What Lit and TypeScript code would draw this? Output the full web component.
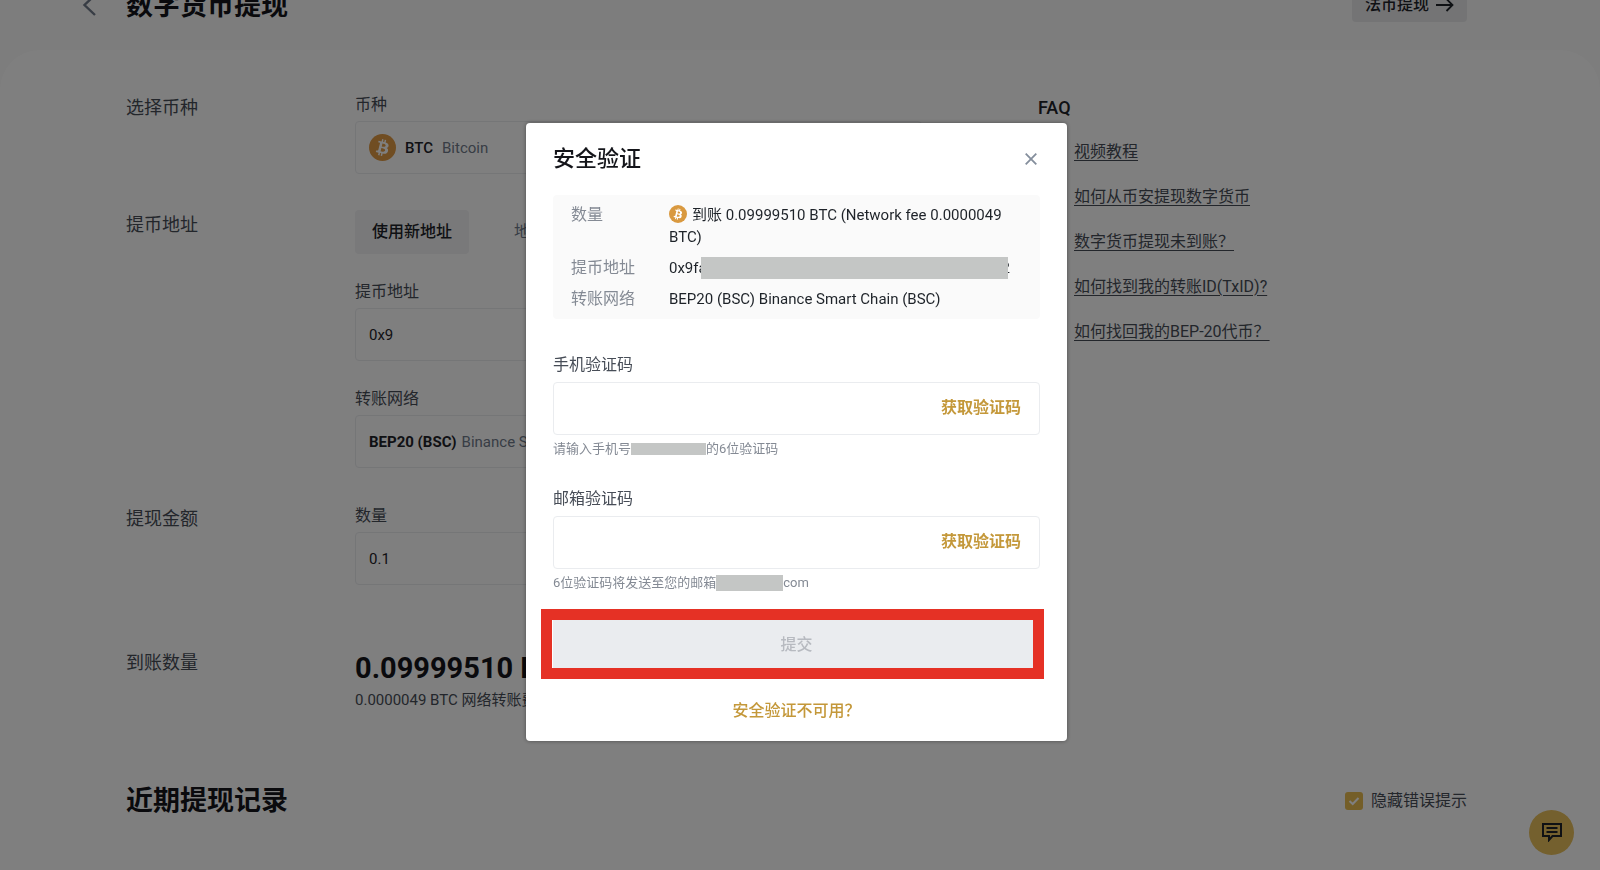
import { LitElement, html, css, svg } from "lit";
import { customElement, property } from "lit/decorators.js";

const coin = svg`
  <circle cx="16" cy="16" r="16" fill="currentColor"></circle>
  <path fill="#fff" fill-rule="evenodd" d="M23.2 14c.3-2.100-1.300-3.300-3.500-4l.7-2.900-1.700-.4-.7 2.800-1.400-.3.700-2.800-1.700-.4-.7 2.800-3.500-.9-.5 1.900s1.300.3 1.300.3c.7.200.8.600.8 1l-2 8c-.1.200-.3.500-.8.400l-1.300-.3-.9 2 3.400.9-.7 2.900 1.700.4.700-2.900 1.400.4-.7 2.800 1.700.4.700-2.900c3 .6 5.200.3 6.200-2.400.7-2.100 0-3.400-1.600-4.200 1.200-.3 2.100-1 2.400-2.600zm-4.100 5.700c-.5 2.200-4.200 1-5.400.7l1-3.900c1.200.3 5 .9 4.400 3.200zm.6-5.700c-.5 2-3.600 1-4.600.7l.9-3.500c1 .3 4.200.7 3.700 2.800z"></path>`;

const base = css`
  :host {
    font-family: Roboto, "Noto Sans CJK SC", sans-serif;
    font-size: 16px;
    line-height: 24px;
    color: #1e2329;
  }
  *,
  *::before,
  *::after {
    box-sizing: border-box;
  }
  h1,
  h2,
  p,
  dl,
  dd,
  ul {
    margin: 0;
    padding: 0;
  }
  button,
  input {
    font: inherit;
    color: inherit;
    background: none;
    border: 0;
    padding: 0;
    margin: 0;
  }
  svg {
    display: block;
    flex: none;
  }
`;

@customElement("code-field")
class CodeField extends LitElement {
  @property() label = "";

  static styles = [
    base,
    css`
      :host {
        display: block;
      }
      .label {
        display: block;
        padding-bottom: 5px;
        color: #474d57;
      }
      .box {
        display: flex;
        align-items: center;
        height: 53px;
        padding: 0 18px 0 14px;
        border: 1px solid #eaecef;
        border-radius: 4px;
      }
      .input {
        flex: 1;
        min-width: 0;
        height: 100%;
        outline: none;
      }
      .get {
        font-weight: 700;
        color: #c4983a;
      }
      .hint {
        display: flex;
        align-items: center;
        margin-top: 4px;
        font-size: 13px;
        line-height: 20px;
        color: #848a94;
      }
    `,
  ];

  render() {
    return html`
      <label class="label" for="code">${this.label}</label>
      <div class="box">
        <input class="input" id="code" type="text" inputmode="numeric" />
        <button class="get" type="button">获取验证码</button>
      </div>
      <p class="hint"><slot></slot></p>
    `;
  }
}

@customElement("verify-dialog")
class VerifyDialog extends LitElement {
  static styles = [
    base,
    css`
      :host {
        position: fixed;
        inset: 0;
        display: flex;
        align-items: center;
        justify-content: center;
        padding: 0 7px 7px 0;
        background: rgba(0, 0, 0, 0.5);
      }
      .dialog {
        width: 541px;
        max-width: 100%;
        padding: 20px 27px 18px;
        border-radius: 4px;
        background: #fff;
        box-shadow: 0 0 4px rgba(0, 0, 0, 0.4);
      }
      .head {
        display: flex;
        align-items: center;
        justify-content: space-between;
        padding-right: 3px;
      }
      .title {
        font-size: 22px;
        line-height: 32px;
        font-weight: 500;
        color: #14151a;
      }
      .close {
        color: #848e9c;
      }
      .summary {
        display: grid;
        grid-template-columns: 98px 1fr;
        row-gap: 9px;
        margin: 20px 0 34px;
        padding: 9px 18px;
        border-radius: 4px;
        line-height: 22px;
        background: #fafafa;
      }
      .term {
        color: #848a94;
      }
      .value {
        font-size: 15px;
      }
      .coin {
        display: inline-block;
        vertical-align: -3px;
        margin-right: 5px;
        color: #d9993f;
      }
      .address {
        display: flex;
      }
      .start {
        width: 32px;
        overflow: hidden;
      }
      .end {
        display: flex;
        justify-content: flex-end;
        width: 2px;
        overflow: hidden;
      }
      .mask {
        background: #c4c6c5;
      }
      .mask-address {
        flex: 1;
        max-width: 307px;
      }
      .mask-phone {
        width: 75px;
        height: 12px;
      }
      .mask-mail {
        width: 67px;
        height: 16px;
      }
      .fields {
        display: grid;
        gap: 28px;
      }
      .submit {
        position: relative;
        display: block;
        width: 100%;
        height: 50px;
        margin: 27px 0 29px;
        font-weight: 500;
        color: #b7bac0;
        background: #eaecef;
      }
      .submit::after {
        content: "";
        position: absolute;
        inset: -11px -4px -9px -12px;
        border: 11px solid #e53125;
      }
      .help {
        display: block;
        text-align: center;
        font-weight: 500;
        text-decoration: none;
        color: #c4983a;
      }
    `,
  ];

  render() {
    return html`
      <section class="dialog" role="dialog" aria-modal="true" aria-labelledby="title">
        <header class="head">
          <h2 class="title" id="title">安全验证</h2>
          <button class="close" type="button" aria-label="关闭">
            <svg width="12" height="12" viewBox="0 0 12 12" fill="none" stroke="currentColor" stroke-width="1.8">
              <path d="M.7.7l10.600 10.600M11.300.7L.7 11.300"></path>
            </svg>
          </button>
        </header>
        <dl class="summary">
          <dt class="term">数量</dt>
          <dd class="value">
            <svg class="coin" width="18" height="18" viewBox="0 0 32 32">${coin}</svg>到账 0.09999510 BTC (Network fee
            0.0000049 BTC)
          </dd>
          <dt class="term">提币地址</dt>
          <dd class="value address">
            <span class="start">0x9fa</span><span class="mask mask-address"></span><span class="end">2</span>
          </dd>
          <dt class="term">转账网络</dt>
          <dd class="value">BEP20 (BSC) Binance Smart Chain (BSC)</dd>
        </dl>
        <div class="fields">
          <code-field label="手机验证码">请输入手机号<span class="mask mask-phone"></span>的6位验证码</code-field>
          <code-field label="邮箱验证码">6位验证码将发送至您的邮箱<span class="mask mask-mail"></span>com</code-field>
        </div>
        <button class="submit" type="submit" disabled>提交</button>
        <a class="help" href="#help">安全验证不可用？</a>
      </section>
    `;
  }
}

@customElement("app-root")
class AppRoot extends LitElement {
  private faq = [
    "视频教程",
    "如何从币安提现数字货币",
    "数字货币提现未到账？",
    "如何找到我的转账ID(TxID)?",
    "如何找回我的BEP-20代币？",
  ];

  static styles = [
    base,
    css`
      :host {
        display: flex;
        flex-direction: column;
        min-height: 100vh;
        overflow: hidden;
        background: #fafafa;
      }
      .top {
        display: flex;
        align-items: flex-start;
        height: 66px;
        margin-top: -16px;
        padding: 0 133px 0 82px;
      }
      .back {
        width: 44px;
        height: 40px;
        color: #707a8a;
      }
      .title {
        flex: 1;
        font-size: 27px;
        line-height: 44px;
        font-weight: 700;
        color: #14151a;
      }
      .fiat {
        display: flex;
        align-items: center;
        gap: 7px;
        height: 38px;
        padding: 4px 13px 0;
        border-radius: 4px;
        font-weight: 500;
        background: #e8e9eb;
      }
      .panel {
        flex: 1;
        padding: 43px 133px 50px 126px;
        border-radius: 40px 40px 0 0;
        background: #fff;
      }
      .columns {
        display: grid;
        grid-template-columns: minmax(0, 796px) minmax(0, 1fr);
        column-gap: 116px;
      }
      .form {
        display: grid;
        row-gap: 36px;
      }
      .row {
        display: grid;
        grid-template-columns: 229px minmax(0, 1fr);
      }
      .row.total {
        margin-top: 27px;
      }
      .name {
        font-size: 18px;
        line-height: 30px;
        color: #474d57;
      }
      .group {
        display: grid;
        gap: 26px;
      }
      .label {
        display: block;
        padding-bottom: 4px;
        color: #474d57;
      }
      .box {
        display: flex;
        align-items: center;
        width: 100%;
        height: 53px;
        padding: 0 13px;
        border: 1px solid #eaecef;
        border-radius: 4px;
        font-size: 15px;
        text-align: left;
      }
      .coin {
        margin-right: 9px;
        color: #e09a45;
      }
      .code {
        margin-right: 9px;
        font-weight: 500;
      }
      .network {
        margin-right: 5px;
        font-weight: 700;
      }
      .muted {
        color: #707a8a;
      }
      .tabs {
        display: flex;
        gap: 28px;
      }
      .tab {
        height: 44px;
        padding: 0 17px;
        border-radius: 4px;
        color: #707a8a;
      }
      .tab.on {
        color: #1e2329;
        font-weight: 500;
        background: #f3f3f4;
      }
      .sum {
        font-size: 29px;
        line-height: 40px;
        font-weight: 700;
        color: #14151a;
      }
      .fee {
        font-size: 15px;
        color: #474d57;
      }
      .faq-title {
        margin-bottom: 17px;
        font-size: 18px;
        line-height: 30px;
        font-weight: 500;
      }
      .faq {
        display: grid;
        gap: 21px;
        padding-left: 36px;
        list-style: none;
      }
      .link {
        color: #474d57;
        text-underline-offset: 3px;
      }
      .history {
        display: flex;
        align-items: center;
        justify-content: space-between;
        margin-top: 67px;
      }
      .check {
        display: flex;
        align-items: center;
        gap: 8px;
        color: #474d57;
      }
      .tick {
        display: grid;
      }
      .tick > * {
        grid-area: 1 / 1;
      }
      .tick-input {
        appearance: none;
        width: 18px;
        height: 18px;
        border-radius: 3px;
        background: #e8bc50;
      }
      .chat {
        position: fixed;
        right: 26px;
        bottom: 15px;
        display: grid;
        place-items: center;
        width: 45px;
        height: 45px;
        border-radius: 50%;
        background: #e8c05c;
      }
    `,
  ];

  render() {
    return html`
      <header class="top">
        <button class="back" type="button" aria-label="返回">
          <svg width="14" height="40" viewBox="0 0 14 40" fill="none" stroke="currentColor" stroke-width="2.400">
            <path d="M13 11L2.500 21L13 31"></path>
          </svg>
        </button>
        <h1 class="title">数字货币提现</h1>
        <button class="fiat" type="button">
          法币提现
          <svg width="18" height="14" viewBox="0 0 18 14" fill="none" stroke="currentColor" stroke-width="1.800">
            <path d="M0 7H16.500M10.500 1L16.500 7L10.500 13"></path>
          </svg>
        </button>
      </header>
      <main class="panel">
        <div class="columns">
          <form class="form">
            <div class="row">
              <span class="name">选择币种</span>
              <div>
                <label class="label" for="coin">币种</label>
                <button class="box" id="coin" type="button" aria-haspopup="listbox">
                  <svg class="coin" width="27" height="27" viewBox="0 0 32 32">${coin}</svg>
                  <span class="code">BTC</span><span class="muted">Bitcoin</span>
                </button>
              </div>
            </div>
            <div class="row">
              <span class="name">提币地址</span>
              <div class="group">
                <div class="tabs">
                  <button class="tab on" type="button">使用新地址</button>
                  <button class="tab" type="button">地址簿</button>
                </div>
                <div>
                  <label class="label" for="address">提币地址</label>
                  <input class="box" id="address" type="text" value="0x9" />
                </div>
                <div>
                  <label class="label" for="network">转账网络</label>
                  <button class="box" id="network" type="button" aria-haspopup="listbox">
                    <span class="network">BEP20 (BSC)</span><span class="muted">Binance Smart Chain (BSC)</span>
                  </button>
                </div>
              </div>
            </div>
            <div class="row">
              <span class="name">提现金额</span>
              <div>
                <label class="label" for="amount">数量</label>
                <input class="box" id="amount" type="text" value="0.1" />
              </div>
            </div>
            <div class="row total">
              <span class="name">到账数量</span>
              <div>
                <p class="sum">0.09999510 BTC</p>
                <p class="fee">0.0000049 BTC 网络转账费</p>
              </div>
            </div>
          </form>
          <aside>
            <h2 class="faq-title">FAQ</h2>
            <ul class="faq">
              ${this.faq.map((text) => html`<li><a class="link" href="#faq">${text}</a></li>`)}
            </ul>
          </aside>
        </div>
        <div class="history">
          <h2 class="title">近期提现记录</h2>
          <label class="check">
            <span class="tick">
              <input class="tick-input" type="checkbox" checked />
              <svg width="18" height="18" viewBox="0 0 18 18" fill="none" stroke="#fff" stroke-width="2">
                <path d="M4.500 9l3.200 3L13.500 6"></path>
              </svg>
            </span>
            隐藏错误提示
          </label>
        </div>
      </main>
      <button class="chat" type="button" aria-label="在线客服">
        <svg width="20" height="19" viewBox="0 0 20 19" fill="none" stroke="currentColor" stroke-width="2">
          <path d="M1 1h18v12H10.500L7 17V13H1z"></path>
          <path d="M4.500 5h11M4.500 9h11"></path>
        </svg>
      </button>
      <verify-dialog></verify-dialog>
    `;
  }
}
